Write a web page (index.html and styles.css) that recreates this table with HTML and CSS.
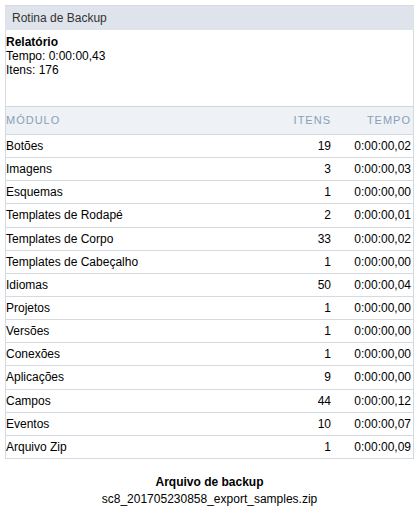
FILE: index.html
```html
<!DOCTYPE html>
<html>
<head>
<meta charset="utf-8">
<link rel="stylesheet" href="styles.css">
</head>
<body>
<div class="panel">
  <div class="panel-title">Rotina de Backup</div>
  <div class="report">
    <div class="report-head">Relatório</div>
    <div>Tempo: 0:00:00,43</div>
    <div>Itens: 176</div>
  </div>
  <table class="grid">
    <thead>
      <tr><th class="c-mod">MÓDULO</th><th class="c-num">ITENS</th><th class="c-time">TEMPO</th></tr>
    </thead>
    <tbody>
      <tr><td>Botões</td><td class="c-num">19</td><td class="c-time">0:00:00,02</td></tr>
      <tr><td>Imagens</td><td class="c-num">3</td><td class="c-time">0:00:00,03</td></tr>
      <tr><td>Esquemas</td><td class="c-num">1</td><td class="c-time">0:00:00,00</td></tr>
      <tr><td>Templates de Rodapé</td><td class="c-num">2</td><td class="c-time">0:00:00,01</td></tr>
      <tr><td>Templates de Corpo</td><td class="c-num">33</td><td class="c-time">0:00:00,02</td></tr>
      <tr><td>Templates de Cabeçalho</td><td class="c-num">1</td><td class="c-time">0:00:00,00</td></tr>
      <tr><td>Idiomas</td><td class="c-num">50</td><td class="c-time">0:00:00,04</td></tr>
      <tr><td>Projetos</td><td class="c-num">1</td><td class="c-time">0:00:00,00</td></tr>
      <tr><td>Versões</td><td class="c-num">1</td><td class="c-time">0:00:00,00</td></tr>
      <tr><td>Conexões</td><td class="c-num">1</td><td class="c-time">0:00:00,00</td></tr>
      <tr><td>Aplicações</td><td class="c-num">9</td><td class="c-time">0:00:00,00</td></tr>
      <tr><td>Campos</td><td class="c-num">44</td><td class="c-time">0:00:00,12</td></tr>
      <tr><td>Eventos</td><td class="c-num">10</td><td class="c-time">0:00:00,07</td></tr>
      <tr><td>Arquivo Zip</td><td class="c-num">1</td><td class="c-time">0:00:00,09</td></tr>
    </tbody>
  </table>
</div>
<div class="footer">
  <div class="footer-head">Arquivo de backup</div>
  <div>sc8_201705230858_export_samples.zip</div>
</div>
</body>
</html>
```
FILE: styles.css
```css
html, body {
  margin: 0;
  padding: 0;
  background: #ffffff;
}
body {
  padding: 5px 6px 0 5px;
  font-family: "Liberation Sans", Arial, sans-serif;
  font-size: 12px;
  color: #000;
}
.panel {
  border: 1px solid #d5dae1;
  border-top: 0;
  border-bottom: 0;
}
.panel-title {
  background: #dfe3eb;
  color: #333;
  height: 24px;
  line-height: 24px;
  padding-left: 7px;
  border-top: 1px solid #d5dae1;
  margin: 0 -1px;
  padding-right: 1px;
}
.report {
  height: 71px;
  padding-top: 5px;
  line-height: 14px;
}
.report-head {
  font-weight: bold;
}
.grid {
  width: 100%;
  border-collapse: collapse;
}
.grid th {
  background: #eef1f5;
  color: #8aa0b4;
  font-weight: normal;
  font-size: 11px;
  letter-spacing: 1px;
  height: 25px;
  padding: 0 0 2px 0;
  border-top: 1px solid #cfd5dd;
  border-bottom: 1px solid #d5dae1;
}
.grid td {
  height: 22.15px;
  padding: 0;
  border-bottom: 1px solid #d5dae1;
}
.c-mod { text-align: left; }
.c-num { text-align: right; width: 60px; }
.grid .c-time { text-align: right; width: 80px; padding-right: 2px; }
.footer {
  text-align: center;
  margin-top: 15px;
  line-height: 17px;
}
.footer-head {
  font-weight: bold;
}
```
